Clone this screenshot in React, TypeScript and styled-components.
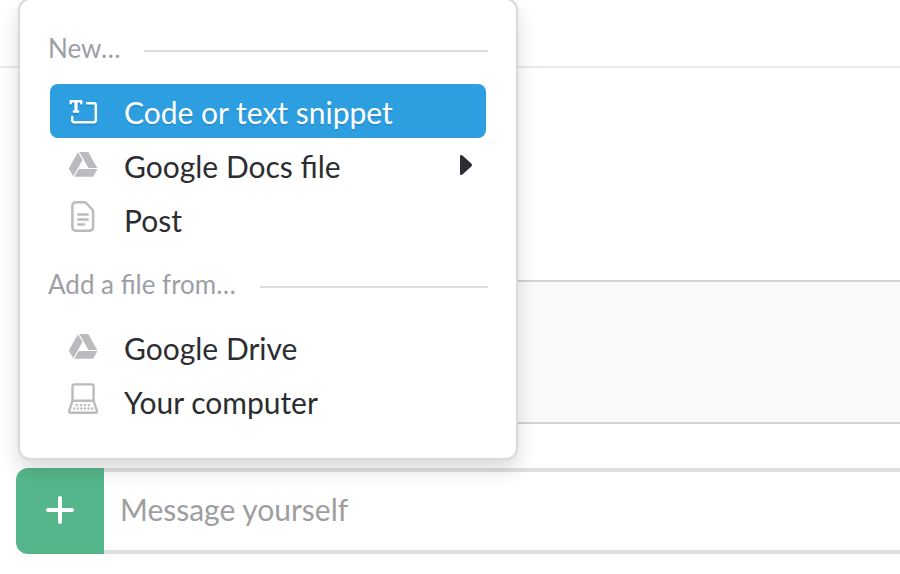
import React from "react";
import styled, { createGlobalStyle, css } from "styled-components";

const GlobalStyle = createGlobalStyle`
  * { box-sizing: border-box; }
  body {
    margin: 0;
    background: #fff;
    font-family: Lato, "Liberation Sans", sans-serif;
    -webkit-font-smoothing: antialiased;
    overflow: hidden;
  }
`;

const Page = styled.main`
  position: relative;
  display: flex;
  flex-direction: column;
  height: 574px;
  overflow: hidden;
  background: #fff;
`;

const Header = styled.header`
  height: 68px;
  flex: none;
  border-bottom: 2px solid #e8e8e8;
`;

const Messages = styled.section`
  height: 212px;
  flex: none;
`;

const Attachment = styled.section`
  height: 144px;
  flex: none;
  margin-left: 120px;
  background: #fbfaf8;
  border-top: 2px solid #d3d3d4;
  border-bottom: 2px solid #d3d3d4;
`;

const Composer = styled.form`
  display: flex;
  height: 86px;
  flex: none;
  margin: 44px 0 0 16px;
`;

const AddButton = styled.button`
  display: flex;
  justify-content: center;
  width: 88px;
  padding: 28px 0 0;
  border: 0;
  border-radius: 12px 0 0 12px;
  background: #56b68b;
  flex: none;
`;

const MessageInput = styled.div`
  flex: 1;
  padding: 0 0 0 16px;
  border-top: 4px solid #e0e0e0;
  border-bottom: 4px solid #e0e0e0;
  color: #9e9ea0;
  font-size: 30px;
  line-height: 74px;
`;

const Menu = styled.nav`
  position: absolute;
  left: 18px;
  top: -2px;
  width: 500px;
  height: 462px;
  padding: 32px 28px 0;
  border: 2px solid #d9d9da;
  border-radius: 12px;
  background: #fff;
  box-shadow: 0 10px 20px rgba(0, 0, 0, 0.15);
`;

const Heading = styled.div<{ $spaced?: boolean }>`
  display: flex;
  align-items: flex-start;
  gap: 24px;
  height: 34px;
  margin-top: ${(p) => (p.$spaced ? "22px" : "0")};
  margin-bottom: 18px;
  color: #9e9ea6;
  font-size: 26px;
  line-height: 32px;
  white-space: nowrap;

  &::after {
    content: "";
    flex: 1;
    height: 2px;
    margin-top: 18px;
    background: #dcdcdd;
  }
`;

const Item = styled.div<{ $active?: boolean }>`
  display: flex;
  align-items: flex-start;
  height: 54px;
  margin: 0 2px;
  padding: 9px 14px 0 17px;
  border-radius: 8px;
  color: #2c2d30;
  ${(p) =>
    p.$active &&
    css`
      background: #2d9ee0;
      color: #fff;
      text-shadow: 0 2px 0 rgba(0, 0, 0, 0.1);
      svg {
        filter: drop-shadow(0 2px 0 rgba(0, 0, 0, 0.1));
      }
    `}
`;

const Label = styled.span`
  flex: 1;
  margin-left: 25px;
  font-size: 30px;
  line-height: 38px;
  white-space: nowrap;
`;

const Glyph = styled.svg`
  width: 32px;
  height: 36px;
  flex: none;
  overflow: visible;
  color: #babbbf;
`;

const Arrow = styled.svg`
  width: 12px;
  height: 20px;
  margin-top: 8px;
  flex: none;
`;

const SnippetIcon = () => (
  <Glyph viewBox="0 0 32 36" fill="none" stroke="#fff" strokeWidth="2.4" strokeLinecap="round" strokeLinejoin="round">
    <path d="M3.7 10.2V8.3H14.3V10.2M6.8 18.5H11.2" />
    <path d="M9 8.4V18.6" strokeWidth="3.2" strokeLinecap="butt" />
    <path d="M20 10.2H26.8Q28.8 10.2 28.8 12.2V27.2Q28.8 29.2 26.8 29.2H7.2Q5.2 29.2 5.2 27.2V24" />
  </Glyph>
);

const DriveIcon = () => (
  <Glyph viewBox="0 0 32 36" fill="currentColor">
    <path d="M11 5.3L1.7 21.4L6.3 29.3L15.5 13.1Z" />
    <path d="M12.3 5H21.2L30.3 20.9H21.5Z" />
    <path d="M11.8 22H30.5L26 29.8H7.4Z" />
  </Glyph>
);

const PostIcon = () => (
  <Glyph viewBox="0 0 32 36" fill="none" stroke="currentColor" strokeWidth="2.5" strokeLinecap="round" strokeLinejoin="round">
    <path d="M9.3 1.3H17.2Q18.4 1.3 19.3 2.2L25.2 8.5Q26.1 9.4 26.1 10.7V25.8Q26.1 29.8 22.1 29.8H9.3Q5.4 29.8 5.4 25.8V5.2Q5.4 1.3 9.3 1.3Z" />
    <path d="M11.3 13.5H20.7M11.3 18.5H20.7M11.3 23.5H17" />
  </Glyph>
);

const keys: [number, number][] = [
  [9.8, 22], [13.8, 22], [17.8, 22], [21.8, 22],
  [7.2, 25.5], [10.8, 25.5], [14.4, 25.5], [18, 25.5], [21.6, 25.5], [25.2, 25.5],
];

const ComputerIcon = () => (
  <Glyph viewBox="0 0 32 36" fill="none" stroke="currentColor" strokeWidth="2.4" strokeLinejoin="round">
    <path d="M5.5 17.7V3.4Q5.5 1.4 7.5 1.4H24.6Q26.6 1.4 26.6 3.4V17.7Z" />
    <path d="M5.5 17.7L2.2 27.8Q1.7 29.7 3.6 29.7H28.5Q30.4 29.7 29.9 27.8L26.6 17.7" />
    {keys.map(([x, y]) => (
      <circle key={`${x}-${y}`} cx={x} cy={y} r="1.2" fill="currentColor" stroke="none" />
    ))}
  </Glyph>
);

export default function App() {
  return (
    <Page>
      <GlobalStyle />
      <Header />
      <Messages />
      <Attachment />
      <Composer>
        <AddButton type="button" aria-label="Add">
          <svg width="28" height="28" viewBox="0 0 28 28" stroke="#fff" strokeWidth="4" strokeLinecap="round">
            <path d="M14 2V26M2 14H26" />
          </svg>
        </AddButton>
        <MessageInput>Message yourself</MessageInput>
      </Composer>
      <Menu>
        <Heading>New…</Heading>
        <Item $active>
          <SnippetIcon />
          <Label>Code or text snippet</Label>
        </Item>
        <Item>
          <DriveIcon />
          <Label>Google Docs file</Label>
          <Arrow viewBox="0 0 12 20" fill="#2c2d30">
            <path d="M0 1Q0 0 1 0Q2 0 3 1L11.3 8.6Q12.7 10 11.3 11.4L3 19Q2 20 1 20Q0 20 0 19Z" />
          </Arrow>
        </Item>
        <Item>
          <PostIcon />
          <Label>Post</Label>
        </Item>
        <Heading $spaced>Add a file from…</Heading>
        <Item>
          <DriveIcon />
          <Label>Google Drive</Label>
        </Item>
        <Item>
          <ComputerIcon />
          <Label>Your computer</Label>
        </Item>
      </Menu>
    </Page>
  );
}
